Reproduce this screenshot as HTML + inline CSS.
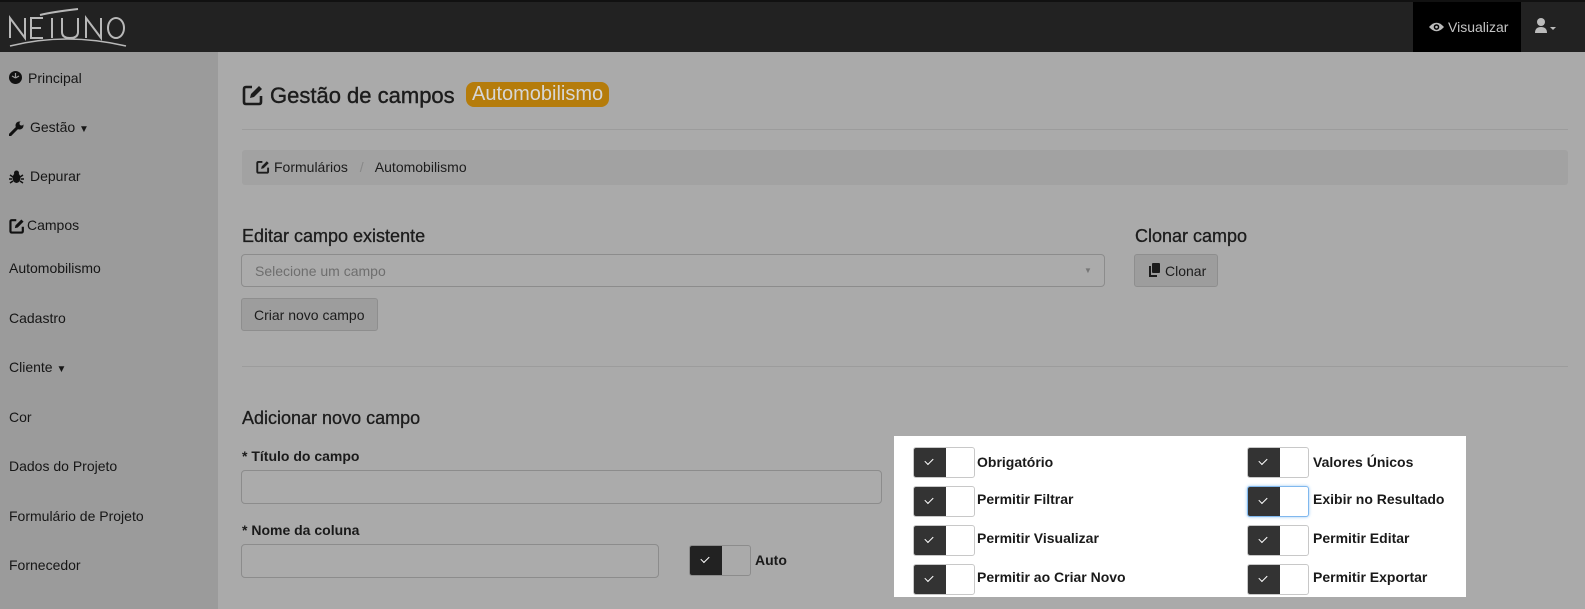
<!DOCTYPE html>
<html><head><meta charset="utf-8">
<style>
*{box-sizing:border-box;margin:0;padding:0}
body{width:1585px;height:609px;overflow:hidden;background:#aaa;font-family:"Liberation Sans",Arial,sans-serif;color:#1c1c1c;position:relative}
.a{position:absolute}
.top{left:0;top:0;width:1585px;height:52px;background:#222;border-top:2px solid #111}
.side{left:0;top:52px;width:218px;height:557px;background:#9b9b9b}
.side div{position:absolute;left:9px;font-size:14px;color:#161616;white-space:nowrap}
.tg{position:absolute;width:62px;height:31px;border:1px solid #c8c8c8;border-radius:3px;background:#fff;overflow:hidden}
.tg i{position:absolute;left:0;top:0;width:32px;height:100%;background:#333}
.tg i:after{content:"";position:absolute;left:11px;top:10px;width:7px;height:4px;border-left:1.5px solid #fff;border-bottom:1.5px solid #fff;transform:rotate(-45deg)}
.lb{position:absolute;font-size:14px;font-weight:bold;color:#1a1a1a}
.inp{position:absolute;border:1px solid #8c8c8c;border-radius:4px;background:#ababab}
.btn{position:absolute;border:1px solid #8e8e8e;border-radius:3px;background:#9d9d9d;font-size:14px;color:#1c1c1c}
.h{position:absolute;font-size:18px;color:#1c1c1c;-webkit-text-stroke:0.3px #1c1c1c}
</style></head><body>
<div class="a top"></div>
<svg class="a" style="left:6px;top:6px" width="124" height="42" viewBox="0 0 124 42">
<g fill="none" stroke="#b8b8b8" stroke-width="2">
<path d="M4 32V12L19 32V12"/><path d="M37 12H25V32H37M25 22H35"/>
<path d="M46 12V32"/><path d="M34 9Q46 6 72 3"/>
<path d="M56 12V26Q56 32 64 32Q72 32 72 26V12"/>
<path d="M80 32V12L95 32V12"/><ellipse cx="110" cy="22" rx="8" ry="10"/>
<path d="M4 40Q60 26 120 40" stroke-width="1.6"/></g></svg>
<div class="a" style="left:1413px;top:2px;width:108px;height:50px;background:#000"></div>
<svg class="a" style="left:1429px;top:21px" width="15" height="12" viewBox="0 0 16 12"><path d="M0 6Q8 -3 16 6Q8 15 0 6Z" fill="#bbb"/><circle cx="8" cy="6" r="3" fill="#000"/><circle cx="8" cy="6" r="1.4" fill="#bbb"/></svg>
<div class="a" style="left:1448px;top:19px;font-size:14px;color:#c4c4c4">Visualizar</div>
<svg class="a" style="left:1535px;top:18px" width="28" height="16" viewBox="0 0 28 16"><circle cx="6" cy="4" r="4" fill="#bbb"/><path d="M0 15Q0 9 6 9Q12 9 12 15Z" fill="#bbb"/><path d="M15 9H21L18 12Z" fill="#bbb"/></svg>

<div class="a side">
<div style="top:18px;left:28px">Principal</div>
<svg class="a" style="left:9px;top:19px" width="13" height="13" viewBox="0 0 13 13"><circle cx="6.5" cy="6.5" r="6.5" fill="#111"/><path d="M6.5 2V6.5M3 5L6.5 7M10 5L6.5 7" stroke="#9b9b9b" stroke-width="1.2"/></svg>
<div style="top:67px;left:30px">Gestão <span style="font-size:10px">▼</span></div>
<svg class="a" style="left:9px;top:69px" width="15" height="15" viewBox="0 0 15 15"><path d="M1 14L8 7" stroke="#111" stroke-width="3" stroke-linecap="round"/><circle cx="10.5" cy="4.5" r="4" fill="#111"/><circle cx="12.5" cy="2.5" r="2" fill="#9b9b9b"/></svg>
<div style="top:116px;left:30px">Depurar</div>
<svg class="a" style="left:9px;top:118px" width="15" height="14" viewBox="0 0 15 14"><ellipse cx="7.5" cy="8" rx="4" ry="5" fill="#111"/><circle cx="7.5" cy="3" r="2.5" fill="#111"/><path d="M1 5L4 7M14 5L11 7M0 9H3M15 9H12M1 13L4 11M14 13L11 11" stroke="#111" stroke-width="1.5"/></svg>
<div style="top:165px;left:27px">Campos</div>
<svg class="a" style="left:9px;top:166px" width="16" height="16" viewBox="0 0 22 22"><path d="M10 3H4Q2 3 2 5V18Q2 20 4 20H17Q19 20 19 18V12" fill="none" stroke="#111" stroke-width="3"/><path d="M8 14L9 10L17 2L20 5L12 13Z" fill="#111"/></svg>
<div style="top:208px">Automobilismo</div>
<div style="top:258px">Cadastro</div>
<div style="top:307px">Cliente <span style="font-size:10px">▼</span></div>
<div style="top:357px">Cor</div>
<div style="top:406px">Dados do Projeto</div>
<div style="top:456px">Formulário de Projeto</div>
<div style="top:505px">Fornecedor</div>
</div>

<svg class="a" style="left:242px;top:84px" width="22" height="22" viewBox="0 0 22 22"><path d="M10 3H4Q2 3 2 5V18Q2 20 4 20H17Q19 20 19 18V12" fill="none" stroke="#1c1c1c" stroke-width="2.6"/><path d="M8 14L9 10L17 2L20 5L12 13Z" fill="#1c1c1c"/></svg>
<div class="a" style="left:270px;top:83px;font-size:22px;color:#1c1c1c;-webkit-text-stroke:0.4px #1c1c1c">Gestão de campos</div>
<div class="a" style="left:466px;top:82px;height:25px;padding:0 6px;background:#b57c0b;border-radius:8px;font-size:20px;line-height:25px;color:#d6d6d6">Automobilismo</div>
<div class="a" style="left:242px;top:129px;width:1326px;height:1px;background:#9c9c9c"></div>
<div class="a" style="left:242px;top:150px;width:1326px;height:35px;background:#a2a2a2;border-radius:3px"></div>
<svg class="a" style="left:256px;top:160px" width="14" height="14" viewBox="0 0 22 22"><path d="M10 3H4Q2 3 2 5V18Q2 20 4 20H17Q19 20 19 18V12" fill="none" stroke="#1c1c1c" stroke-width="3"/><path d="M8 14L9 10L17 2L20 5L12 13Z" fill="#1c1c1c"/></svg>
<div class="a" style="left:274px;top:159px;font-size:14px">Formulários <span style="color:#888;margin:0 8px">/</span> Automobilismo</div>

<div class="h" style="left:242px;top:226px">Editar campo existente</div>
<div class="inp" style="left:241px;top:254px;width:864px;height:33px"></div>
<div class="a" style="left:255px;top:263px;font-size:14px;color:#6e6e6e">Selecione um campo</div>
<div class="a" style="left:1084px;top:266px;font-size:8px;color:#777">▼</div>
<div class="btn" style="left:241px;top:298px;width:137px;height:33px;padding:8px 12px">Criar novo campo</div>
<div class="h" style="left:1135px;top:226px">Clonar campo</div>
<div class="btn" style="left:1134px;top:254px;width:84px;height:33px;padding:8px 0 0 30px">Clonar</div>
<svg class="a" style="left:1148px;top:263px" width="12" height="14" viewBox="0 0 12 14"><rect x="4" y="0" width="8" height="10" rx="1" fill="#1c1c1c"/><path d="M2 3V13H9" fill="none" stroke="#1c1c1c" stroke-width="2"/></svg>
<div class="a" style="left:242px;top:366px;width:1326px;height:1px;background:#9c9c9c"></div>

<div class="h" style="left:242px;top:408px">Adicionar novo campo</div>
<div class="lb" style="left:242px;top:448px">* Título do campo</div>
<div class="inp" style="left:241px;top:470px;width:641px;height:34px"></div>
<div class="lb" style="left:242px;top:522px">* Nome da coluna</div>
<div class="inp" style="left:241px;top:544px;width:418px;height:34px"></div>
<div class="tg" style="left:689px;top:545px;background:#aaa;border-color:#8c8c8c"><i style="background:#222"></i></div>
<div class="lb" style="left:755px;top:552px">Auto</div>

<div class="a" style="left:894px;top:436px;width:572px;height:161px;background:#fff"></div>
<div class="tg" style="left:913px;top:447px"><i></i></div><div class="lb" style="left:977px;top:454px">Obrigatório</div>
<div class="tg" style="left:913px;top:486px"><i></i></div><div class="lb" style="left:977px;top:491px">Permitir Filtrar</div>
<div class="tg" style="left:913px;top:525px"><i></i></div><div class="lb" style="left:977px;top:530px">Permitir Visualizar</div>
<div class="tg" style="left:913px;top:564px"><i></i></div><div class="lb" style="left:977px;top:569px">Permitir ao Criar Novo</div>
<div class="tg" style="left:1247px;top:447px"><i></i></div><div class="lb" style="left:1313px;top:454px">Valores Únicos</div>
<div class="tg" style="left:1247px;top:486px;border-color:#80b8ee;box-shadow:0 0 3px #9cc8f2"><i></i></div><div class="lb" style="left:1313px;top:491px">Exibir no Resultado</div>
<div class="tg" style="left:1247px;top:525px"><i></i></div><div class="lb" style="left:1313px;top:530px">Permitir Editar</div>
<div class="tg" style="left:1247px;top:564px"><i></i></div><div class="lb" style="left:1313px;top:569px">Permitir Exportar</div>
</body></html>
